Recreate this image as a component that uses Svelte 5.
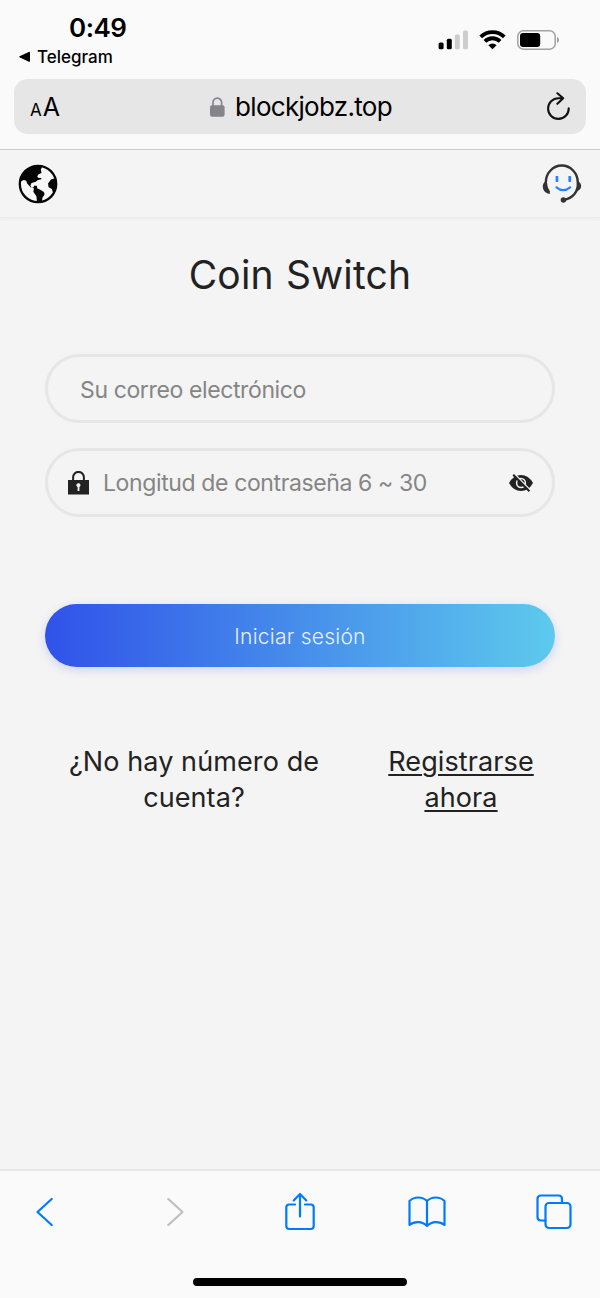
<script>
  let email = $state('');
  let password = $state('');
</script>

<div class="phone">
  <header class="chrome">
    <div class="status">
      <div class="clock">
        <span class="time">0:49</span>
        <span class="back"><svg width="12" height="12" viewBox="0 0 12 12"><path d="M.6 5.200 9.800.9q1.200-.4 1.200.5v8.800q0 .9-1.200.5L.6 6.200Q-.2 5.700.6 5.200Z" /></svg><span>Telegram</span></span>
      </div>
      <div class="signals">
        <svg width="30" height="20" viewBox="0 0 30 20">
          <rect x=".6" y="12.500" width="5" height="6.800" rx="1.500" /><rect x="8.800" y="8.800" width="5" height="10.500" rx="1.500" />
          <g fill="#cdcdcd"><rect x="16.800" y="4.500" width="5" height="14.800" rx="1.500" /><rect x="25" y=".5" width="5" height="18.800" rx="1.500" /></g>
        </svg>
        <svg class="wifi" width="27" height="20" viewBox="0 0 27 20">
          <g fill="none" stroke="#000" stroke-width="3.800"><path d="M1.700 6.800a17 17 0 0 1 23.600 0" /><path d="M5.900 11.300a11 11 0 0 1 15.200 0" /></g>
          <path d="M9.400 15.200a6 6 0 0 1 8.200 0l-4.100 4.100Z" />
        </svg>
        <svg class="battery" width="43" height="20" viewBox="0 0 43 20">
          <rect x=".8" y=".8" width="37.400" height="18.400" rx="5.500" fill="none" stroke="#a1a1a1" stroke-width="1.500" /><rect x="3" y="3" width="20.200" height="14" rx="3.200" /><path d="M40 7q2 .8 2 3t-2 3z" fill="#999" />
        </svg>
      </div>
    </div>
    <div class="address">
      <span class="aa"><small>A</small>A</span>
      <span class="url">
        <svg width="15" height="20" viewBox="0 0 15 20"><rect y="8.200" width="14.600" height="11.600" rx="2" fill="#858489" /><path d="M3 9V5.600a4.300 4.500 0 0 1 8.600 0V9" fill="none" stroke="#858489" stroke-width="1.700" /></svg>
        <span>blockjobz.top</span>
      </span>
      <svg class="reload" width="25" height="30" viewBox="0 0 25 30"><path d="M22.700 16.400A10.300 10.300 0 1 1 12.400 6.300h4.800M11.400 1.300l5.800 5-5.800 5.500" fill="none" stroke="#111" stroke-width="2.100" stroke-linecap="round" stroke-linejoin="round" /></svg>
    </div>
  </header>

  <nav class="site">
    <svg width="40" height="40" viewBox="0 0 40 40">
      <circle cx="20" cy="20" r="18.200" fill="#f7f7f7" stroke="#050505" stroke-width="2.300" />
      <path d="M2 18C3 8 11 1.500 20.500 1.500L24 3.200 22.800 5.500 23.500 9l-3.300 1.500-1 2.300 1.600 1.200h2.700l-.4 1.200-3.600 1-1.700 1.600-4.300 1.200-1.100 2.500 1 2 1.700.3 1.400-2.300 2.500.4.2 2.500 2.200.8 4.500 2.800.7 2.500-2.200 3.300L24 38h-5l-.6-5.700-3.100-4.600.7-3.100-3.400-1.300-3.400-3.700-1.200-3L5.500 16Z" fill="#050505" />
      <path d="m37.700 14-4.700 1.400-3 4.100.6 3.700 3.300 1.800 1.300 4.500q4.600-6.500 2.500-15.500Z" fill="#050505" />
    </svg>
    <svg width="40" height="40" viewBox="0 0 40 40">
      <path d="M7 28.500Q3.800 24 3.800 18.500a16 17 0 0 1 32 0C36.500 27.500 31 34.500 21.500 36" fill="none" stroke="#333" stroke-width="2.400" />
      <path d="M4.200 17C.6 18.500-.1 22.800 1.800 26.300 3 28.600 5 29.700 8 30L7.600 27.300Q4.500 23.500 4.200 17ZM35.600 17c4 1.700 4.600 6 1.900 8.800q-1.700 1.700-4 1.900 2.600-5 2.100-10.700Z" fill="#333" />
      <circle cx="21.400" cy="36" r="2.700" fill="#333" />
      <g fill="#2681ff"><rect x="13.600" y="12" width="2.700" height="5.900" rx=".6" /><rect x="26.400" y="12" width="2.700" height="5.900" rx=".6" /></g>
      <path d="M14.500 23.300q6.700 5.600 13.600 0" fill="none" stroke="#2681ff" stroke-width="2.200" stroke-linecap="round" />
    </svg>
  </nav>

  <main>
    <h1>Coin Switch</h1>
    <label class="field email"><input type="text" placeholder="Su correo electrónico" bind:value={email} /></label>
    <label class="field password">
      <svg width="21" height="24" viewBox="0 0 21 24"><path d="M5.100 10V6.300a5.400 5.400 0 0 1 10.800 0V10" fill="none" stroke="#222" stroke-width="2" /><path d="M0 9h21v14.500H0Z" fill="#222" /><path d="M8.300 14.300a2.100 2.100 0 1 1 3.100 1.800V20H9.600v-3.900a2 2 0 0 1-1.300-1.800Z" fill="#f4f4f4" /></svg>
      <input type="password" placeholder="Longitud de contraseña 6 ~ 30" bind:value={password} />
      <svg width="24" height="18" viewBox="0 0 24 18"><path d="M0 9Q4.500 1 12 1t12 8q-4.500 8-12 8T0 9Z" fill="#222" /><circle cx="12" cy="9" r="4.400" fill="none" stroke="#f4f4f4" stroke-width="1.500" /><path d="m5.900.2 16 16.500" stroke="#f4f4f4" stroke-width="1.500" /><path d="m4.200.7 16.200 16.600" stroke="#222" stroke-width="2" /></svg>
    </label>
    <button class="login">Iniciar sesión</button>
    <div class="signup"><span>¿No hay número de<br />cuenta?</span><a href="#registro">Registrarse<br />ahora</a></div>
  </main>

  <footer>
    <div class="tools">
      <svg width="18" height="30" viewBox="0 0 18 30"><path d="M15.700 2 1.500 15l14.200 13" /></svg>
      <svg class="next" width="18" height="30" viewBox="0 0 18 30"><path d="m2.300 2 14.200 13-14.200 13" /></svg>
      <svg class="share" width="32" height="40" viewBox="0 0 32 40"><path d="M11 12.500H5.200Q2.300 12.500 2.300 15.500v18.500q0 3 3 3h21.400q3 0 3-3V15.500q0-3-2.900-3H21M16 24.500V2.500M9.700 8.400 16 2l6.300 6.400" /></svg>
      <svg class="book" width="38" height="34" viewBox="0 0 38 34"><path d="M19 6v25M19 6C14.200 1.300 6.300 1.300 1.500 6v24c4.800-4 12.700-4 17.500 1 4.800-5 12.700-5 17.500-1V6C31.700 1.300 23.800 1.300 19 6" /></svg>
      <svg class="tabs" width="36" height="36" viewBox="0 0 36 36"><path d="M9.500 26.500H5q-3.500 0-3.500-3.500V5q0-3.500 3.500-3.500h17.500Q26 1.500 26 5v4" /><rect x="9.500" y="9" width="25" height="25" rx="3.500" /></svg>
    </div>
    <div class="home"></div>
  </footer>
</div>

<style>
  :global(body) { background: #f4f4f4; }
  .phone, .phone * { box-sizing: border-box; }
  .phone { width: 600px; height: 1298px; display: flex; flex-direction: column; overflow: hidden; background: #f4f4f4; color: #222; font-family: Inter, "Liberation Sans", sans-serif; }
  svg { display: block; flex: none; }
  .chrome { height: 150px; padding: 12px 14px 0; background: #fafafa; border-bottom: 1px solid #cbcbcb; color: #000; flex: none; }
  .status { height: 67px; display: flex; justify-content: space-between; }
  .clock { display: flex; flex-direction: column; padding-left: 5px; }
  .time { font-size: 26px; line-height: 32px; font-weight: 600; padding-left: 50px; letter-spacing: -.5px; }
  .back { display: flex; align-items: center; gap: 6px; font-size: 17px; line-height: 22px; font-weight: 500; margin-top: 2px; }
  .signals { display: flex; align-items: flex-start; padding: 18px 26px 0 0; }
  .wifi { margin-left: 11px; }
  .battery { margin-left: 11px; }
  .address { height: 55px; padding: 0 15px 0 16px; display: flex; align-items: center; justify-content: space-between; background: #e6e6e6; border-radius: 14px; }
  .aa { width: 32px; font-size: 25px; }
  .aa small { font-size: 17px; margin-right: 1px; }
  .url { display: flex; align-items: center; gap: 10px; margin-right: 6px; font-size: 26px; letter-spacing: -.7px; }
  .site { height: 68px; padding: 0 18px; display: flex; align-items: center; justify-content: space-between; border-bottom: 1px solid #ebebeb; box-shadow: 0 1px 3px #00000008; flex: none; }
  main { flex: 1; display: flex; flex-direction: column; padding: 32px 45px 0; }
  h1 { margin: 0; font-size: 39px; line-height: 50px; font-weight: 400; text-align: center; letter-spacing: .2px; word-spacing: 1px; }
  .field { height: 69px; display: flex; align-items: center; border: 3px solid #e6e6e6; border-radius: 35px; }
  .email { margin-top: 54px; padding: 0 32px; }
  .password { margin-top: 25px; padding: 0 19px 0 20px; }
  input { flex: 1; min-width: 0; padding: 2px 0 0; border: 0; outline: 0; background: transparent; font: 400 23px/30px Inter, "Liberation Sans", sans-serif; letter-spacing: -.38px; color: #222; }
  .password input { margin-left: 14px; padding-top: 0; }
  input::placeholder { color: #858585; opacity: 1; }
  .login { height: 63px; margin-top: 87px; padding: 2px 0 0; border: 0; border-radius: 32px; background: linear-gradient(90deg, #3052e9, #5dcaed); box-shadow: 0 3px 10px #3052e933; color: #e9f1ff; font: 300 21px/30px Inter, "Liberation Sans", sans-serif; letter-spacing: .25px; }
  .signup { display: flex; gap: 24px; margin-top: 77px; font-size: 27px; line-height: 35.500px; text-align: center; letter-spacing: .1px; }
  .signup span { width: 298px; flex: none; }
  .signup a { width: 188px; color: #222; text-decoration-thickness: 2px; text-underline-offset: 3px; flex: none; }
  footer { height: 129px; border-top: 2px solid #e5e5e5; background: #fafafa; flex: none; }
  .tools { height: 82px; padding-left: 36px; display: flex; align-items: center; }
  .tools svg { fill: none; stroke: #007aff; stroke-width: 2.200; stroke-linecap: round; stroke-linejoin: round; }
  .tools .next { stroke: #bfbfbf; margin-left: 112px; }
  .share { margin-left: 100px; }
  .book { margin-left: 92px; }
  .tabs { margin-left: 90px; }
  .home { width: 214px; height: 8px; border-radius: 4px; background: #000; margin: 25px auto 0; }
</style>
